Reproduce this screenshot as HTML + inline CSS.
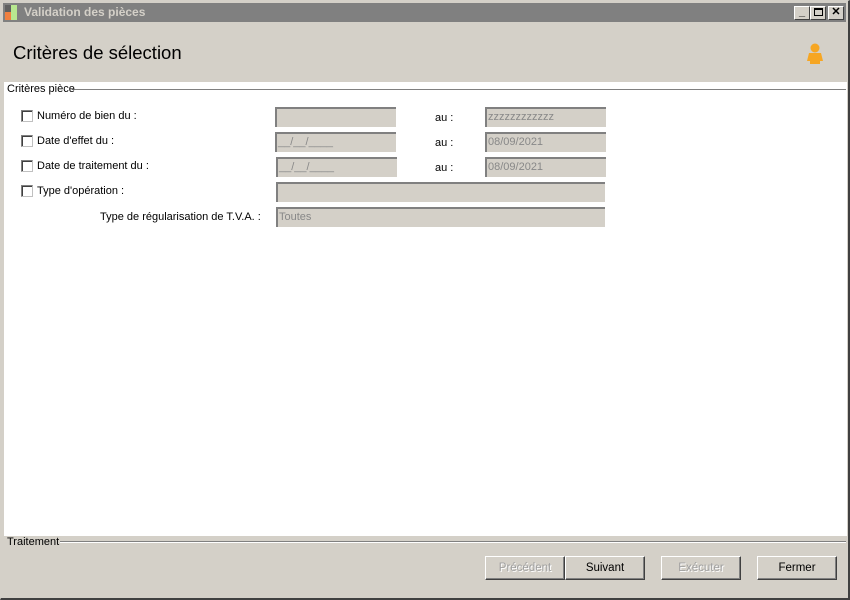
<!DOCTYPE html>
<html><head><meta charset="utf-8"><style>
*{margin:0;padding:0;box-sizing:border-box}
body{width:850px;height:600px;background:#d4d0c8;position:relative;overflow:hidden;font-family:"Liberation Sans",sans-serif;font-size:11px;color:#000}
.abs{position:absolute}
#win{left:0;top:0;width:850px;height:600px;border-top:1px solid #d4d0c8;border-left:1px solid #d4d0c8;border-right:2px solid #404040;border-bottom:2px solid #404040}
#tb{left:3px;top:3px;width:843px;height:19px;background:#808080}
#tt{left:24px;top:5px;color:#d4d0c8;font-weight:bold;font-size:12px}
.wb{top:6px;width:16px;height:14px;background:#d4d0c8;border-top:1px solid #fff;border-left:1px solid #fff;border-right:1px solid #404040;border-bottom:1px solid #404040;font-size:11px;text-align:center;line-height:11px;font-weight:bold}
#hdr{left:13px;top:42px;font-size:18.5px}
#panel{left:4px;top:82px;width:843px;height:454px;background:#fff}
.line{height:2px;border-top:1px solid #808080;border-bottom:1px solid #fff}
.cb{width:12px;height:12px;border:1px solid #808080;border-right-color:#c0c0c0;border-bottom-color:#c0c0c0;background:#fff;box-shadow:inset 1px 1px 0 #404040}
.in{height:20px;background:#d4d0c8;border-top:2px solid #808080;border-left:2px solid #808080;color:#888;padding-left:1px;line-height:16px;font-size:11px}
.btn{top:556px;width:80px;height:24px;background:#d4d0c8;border-top:1px solid #fff;border-left:1px solid #fff;border-right:1px solid #404040;border-bottom:1px solid #404040;box-shadow:inset -1px -1px 0 #808080;text-align:center;line-height:22px;font-size:11.5px}
.dis{color:#a0a0a0;text-shadow:1px 1px 0 #fff}
.lb{font-size:11px}
</style></head><body>
<div id="win" class="abs"></div>
<div id="tb" class="abs"></div>
<div class="abs" style="left:5px;top:5px;width:6px;height:7px;background:#606060"></div>
<div class="abs" style="left:5px;top:12px;width:6px;height:8px;background:#f08040"></div>
<div class="abs" style="left:11px;top:5px;width:6px;height:15px;background:#b8e890"></div>
<div id="tt" class="abs">Validation des pièces</div>
<div class="abs wb" style="left:794px">_</div>
<div class="abs wb" style="left:810px"><span style="display:inline-block;width:9px;height:8px;border:1px solid #000;border-top-width:2px;margin-top:1px"></span></div>
<div class="abs wb" style="left:828px">✕</div>
<div id="hdr" class="abs">Critères de sélection</div>
<svg class="abs" style="left:806px;top:43px" width="18" height="22" viewBox="0 0 18 22"><circle cx="9" cy="5" r="4.5" fill="#f6a623"/><path d="M3 10h12l2 8h-3v3H4v-3H1z" fill="#f6a623"/></svg>
<div id="panel" class="abs"></div>
<div class="abs line" style="left:72px;top:89px;width:774px"></div>
<div class="abs" style="left:7px;top:83px">Critères pièce</div>

<div class="abs cb" style="left:21px;top:110px"></div>
<div class="abs lb" style="left:37px;top:110px">Numéro de bien du :</div>
<div class="abs in" style="left:275px;top:107px;width:121px"></div>
<div class="abs" style="left:435px;top:112px">au :</div>
<div class="abs in" style="left:485px;top:107px;width:121px">zzzzzzzzzzzz</div>

<div class="abs cb" style="left:21px;top:135px"></div>
<div class="abs lb" style="left:37px;top:135px">Date d'effet du :</div>
<div class="abs in" style="left:275px;top:132px;width:121px">__/__/____</div>
<div class="abs" style="left:435px;top:137px">au :</div>
<div class="abs in" style="left:485px;top:132px;width:121px">08/09/2021</div>

<div class="abs cb" style="left:21px;top:160px"></div>
<div class="abs lb" style="left:37px;top:160px">Date de traitement du :</div>
<div class="abs in" style="left:276px;top:157px;width:121px">__/__/____</div>
<div class="abs" style="left:435px;top:162px">au :</div>
<div class="abs in" style="left:485px;top:157px;width:121px">08/09/2021</div>

<div class="abs cb" style="left:21px;top:185px"></div>
<div class="abs lb" style="left:37px;top:185px">Type d'opération :</div>
<div class="abs in" style="left:276px;top:182px;width:329px"></div>

<div class="abs lb" style="left:100px;top:211px">Type de régularisation de T.V.A. :</div>
<div class="abs in" style="left:276px;top:207px;width:329px">Toutes</div>

<div class="abs line" style="left:60px;top:541px;width:786px"></div>
<div class="abs" style="left:7px;top:536px">Traitement</div>
<div class="abs btn dis" style="left:485px">Précédent</div>
<div class="abs btn" style="left:565px">Suivant</div>
<div class="abs btn dis" style="left:661px">Exécuter</div>
<div class="abs btn" style="left:757px">Fermer</div>
</body></html>
